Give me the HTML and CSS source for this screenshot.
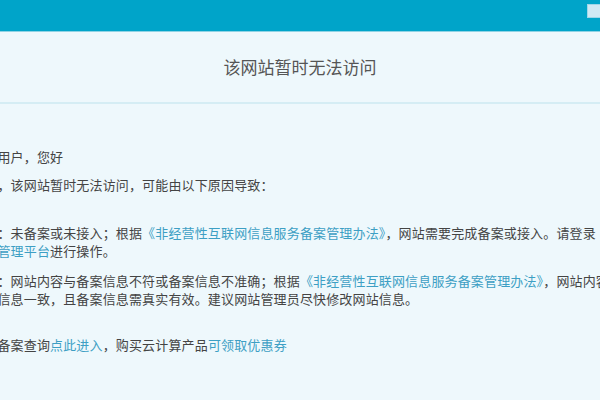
FILE: index.html
```html
<!DOCTYPE html>
<html lang="zh-CN">
<head>
    <meta charset="UTF-8">
    <title>该网站暂时无法访问</title>
    <link rel="stylesheet" href="styles.css">
</head>
<body>
    <div class="topbar">
        <div class="lang-btn"></div>
    </div>
    <h1 class="title">该网站暂时无法访问</h1>
    <div class="content">
        <p class="greet">尊敬的用户，您好</p>
        <p class="intro">很抱歉，该网站暂时无法访问，可能由以下原因导致：</p>
        <p class="reason">原因一：未备案或未接入；根据<a href="#">《非经营性互联网信息服务备案管理办法》</a>，网站需要完成备案或接入。请登录<br><a href="#">云备案管理平台</a>进行操作。</p>
        <p class="reason">原因二：网站内容与备案信息不符或备案信息不准确；根据<a href="#">《非经营性互联网信息服务备案管理办法》</a>，网站内容需<br>与备案信息一致，且备案信息需真实有效。建议网站管理员尽快修改网站信息。</p>
        <p class="more">工信部备案查询<a href="#">点此进入</a>，购买云计算产品<a href="#">可领取优惠券</a></p>
    </div>
</body>
</html>
```

FILE: styles.css
```css
body {
    margin: 0;
    background-color: #eef8fc;
    font-family: "Noto Sans CJK SC", "Noto Sans", sans-serif;
    overflow: hidden;
}

.topbar {
    height: 31px;
    background-color: #00a4c9;
    border-bottom: 1px solid #8fd3e4;
    display: flex;
    justify-content: flex-end;
    align-items: flex-start;
}

.lang-btn {
    width: 20px;
    height: 12px;
    margin-top: 4px;
    margin-right: -9px;
    background-color: #cfe9f4;
    border: 1px solid #9fd6e8;
}

.title {
    margin: 0;
    height: 70px;
    line-height: 70px;
    text-align: center;
    font-size: 17px;
    font-weight: normal;
    color: #555;
    border-bottom: 2px solid #d5edf4;
}

.content {
    margin-left: -42px;
    padding-top: 44px;
    font-size: 13px;
    line-height: 18px;
    letter-spacing: 0.15px;
    color: #444;
    white-space: nowrap;
}

.content p {
    margin: 0;
}

.content a {
    color: #3d9fc4;
    text-decoration: none;
}

.intro {
    margin-top: 10px !important;
}

.reason {
    margin-top: 12px !important;
}

.intro + .reason {
    margin-top: 30px !important;
}

.more {
    margin-top: 28px !important;
}
```
